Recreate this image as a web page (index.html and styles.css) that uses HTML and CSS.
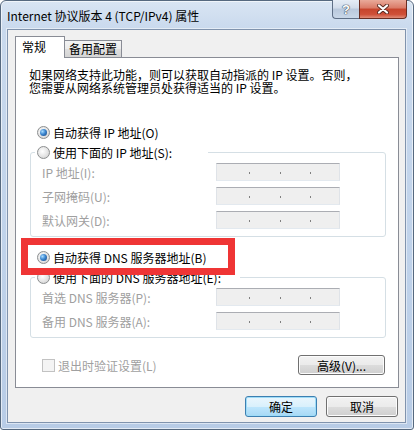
FILE: index.html
```html
<!DOCTYPE html>
<html lang="zh-CN">
<head>
  <meta charset="UTF-8" />
  <title>Internet 协议版本 4 (TCP/IPv4) 属性</title>
  <link rel="stylesheet" href="styles.css">
</head>
<body>
  <div class="window">
    <div class="titlebar">
      <span class="title">Internet 协议版本 4 (TCP/IPv4) 属性</span>
      <div class="caption">
        <div class="cap help">?</div>
        <div class="cap close">
          <svg width="12" height="10" viewBox="0 0 12 10">
            <path d="M2 1.5 L10 8.5 M10 1.5 L2 8.5" stroke="#5a2a22" stroke-width="4" stroke-linecap="round"/>
            <path d="M2 1.5 L10 8.5 M10 1.5 L2 8.5" stroke="#fff" stroke-width="2.2" stroke-linecap="round"/>
          </svg>
        </div>
      </div>
    </div>

    <div class="client">
      <div class="tabs">
        <div class="tab active">常规</div>
        <div class="tab">备用配置</div>
      </div>

      <div class="panel">
        <p class="desc">如果网络支持此功能，则可以获取自动指派的 IP 设置。否则，<br>您需要从网络系统管理员处获得适当的 IP 设置。</p>

        <div class="opt first"><span class="radio on"></span>自动获得 IP 地址(O)</div>

        <fieldset class="group">
          <legend class="opt ip-legend"><span class="radio"></span>使用下面的 IP 地址(S):</legend>
          <div class="field"><span class="lbl">IP 地址(I):</span><span class="ip"><i></i><b></b><i></i><b></b><i></i><b></b><i></i></span></div>
          <div class="field"><span class="lbl">子网掩码(U):</span><span class="ip"><i></i><b></b><i></i><b></b><i></i><b></b><i></i></span></div>
          <div class="field"><span class="lbl">默认网关(D):</span><span class="ip"><i></i><b></b><i></i><b></b><i></i><b></b><i></i></span></div>
        </fieldset>

        <div class="opt dns"><span class="radio on"></span>自动获得 DNS 服务器地址(B)</div>

        <fieldset class="group">
          <legend class="opt dns-legend"><span class="radio"></span>使用下面的 DNS 服务器地址(E):</legend>
          <div class="field"><span class="lbl">首选 DNS 服务器(P):</span><span class="ip"><i></i><b></b><i></i><b></b><i></i><b></b><i></i></span></div>
          <div class="field"><span class="lbl">备用 DNS 服务器(A):</span><span class="ip"><i></i><b></b><i></i><b></b><i></i><b></b><i></i></span></div>
        </fieldset>

        <div class="bottom-row">
          <div class="check"><span class="box"></span>退出时验证设置(L)</div>
          <div class="btn adv">高级(V)...</div>
        </div>

        <div class="mark"></div>
      </div>

      <div class="actions">
        <div class="btn default">确定</div>
        <div class="btn">取消</div>
      </div>
    </div>
  </div>
</body>
</html>
```

FILE: styles.css
```css
body {
  margin: 0;
  font-family: "Noto Sans CJK SC", "Liberation Sans", sans-serif;
  font-size: 12px;
  color: #000;
}

.window {
  width: 414px;
  height: 430px;
  box-sizing: border-box;
  display: flex;
  flex-direction: column;
  border: 1px solid #56697f;
  border-radius: 6px 6px 3px 3px;
  background: linear-gradient(180deg, #d9e5f3 0, #c9d9ed 28px, #bfd2ea 60%, #b8cce6 100%);
  box-shadow: inset 0 0 0 1px rgba(255,255,255,0.6);
}

.titlebar {
  height: 28px;
  display: flex;
  align-items: flex-start;
}

.title {
  padding: 8px 0 0 6px;
  line-height: 14px;
  font-size: 12px;
}

.caption {
  margin-left: auto;
  margin-right: 6px;
  margin-top: -1px;
  display: flex;
}

.cap {
  height: 19px;
  box-sizing: border-box;
  display: flex;
  align-items: center;
  justify-content: center;
  border: 1px solid #5f6f86;
  border-top: none;
}

.help {
  width: 27px;
  border-right: none;
  border-radius: 0 0 0 4px;
  background: linear-gradient(180deg, #e6edf6 0, #d2dcea 45%, #b9c8dc 50%, #c9d7e8 100%);
  color: #fff;
  font-family: "Liberation Sans", sans-serif;
  font-weight: bold;
  font-size: 13px;
  text-shadow: 0 0 1px #3c4a5c, 0 0 1px #3c4a5c, 0 0 1px #3c4a5c;
}

.close {
  width: 48px;
  border-radius: 0 0 4px 0;
  border-color: #6a2d22;
  background: linear-gradient(180deg, #e9aa9a 0, #da7a66 45%, #c6442c 50%, #cf5038 80%, #e08c78 100%);
}

.client {
  flex: 1;
  margin: 0 7px 6px 6px;
  padding: 6px 6px 0 7px;
  border: 1px solid #8093ad;
  background: #f0f0f0;
  box-shadow: 0 0 0 1px rgba(255,255,255,0.5);
}

.tabs {
  display: flex;
  align-items: flex-end;
  height: 21px;
}

.tab {
  height: 17px;
  box-sizing: border-box;
  padding: 0 4px;
  margin-left: -1px;
  line-height: 15px;
  border: 1px solid #898c95;
  border-bottom: none;
  background: linear-gradient(180deg, #f3f3f3 0, #ebebeb 50%, #dfdfdf 50%, #d4d4d4 100%);
}

.tab.active {
  width: 50px;
  height: 22px;
  margin-left: 0;
  margin-bottom: -1px;
  padding: 3px 0 0 6px;
  line-height: 14px;
  background: #fff;
  position: relative;
  z-index: 1;
}

.panel {
  height: 331px;
  box-sizing: border-box;
  border: 1px solid #898c95;
  background: #fff;
  position: relative;
}

.desc {
  margin: 10px 0 0 13px;
  line-height: 13px;
}

.opt {
  display: flex;
  align-items: center;
  height: 16px;
  gap: 3px;
}

.opt.first {
  margin: 30px 0 0 21px;
}

.opt.dns {
  margin: 12px 0 0 21px;
}

.radio {
  width: 13px;
  height: 13px;
  box-sizing: border-box;
  border-radius: 50%;
  border: 1px solid #8c8e8f;
  background: radial-gradient(circle at 40% 40%, #ffffff 0, #e6e6e6 50%, #cbcbcb 100%);
  position: relative;
  flex: none;
}

.radio.on::after {
  content: "";
  position: absolute;
  inset: 2px;
  border-radius: 50%;
  background: radial-gradient(circle at 35% 35%, #a8dcff 0, #3b86d0 45%, #163f78 100%);
}

.group {
  margin: 4px 12px 0 14px;
  padding: 0 0 7px 4px;
  border: 1px solid #d5dfe5;
  border-radius: 3px;
}

.group legend {
  padding: 0 0 0 2px;
}

.ip-legend {
  width: 171px;
}

.dns-legend {
  width: 203px;
}

.field {
  display: flex;
  align-items: center;
  height: 18px;
  margin-top: 6px;
  padding-left: 7px;
  color: #a0a0a0;
}

.group legend + .field {
  margin-top: 3px;
}

.lbl {
  width: 174px;
}

.ip {
  width: 124px;
  height: 18px;
  box-sizing: border-box;
  display: flex;
  padding-left: 4px;
  border: 1px solid;
  border-color: #abadb3 #dfe3e8 #e3e9ef #dfe3e8;
  background: #efefef;
}

.ip i {
  flex: 1;
}

.ip b {
  width: 3px;
  display: flex;
  justify-content: center;
}

.ip b::before {
  content: "";
  width: 1px;
  height: 2px;
  margin-top: 8px;
  background: #808080;
}

.bottom-row {
  display: flex;
  align-items: center;
  justify-content: space-between;
  height: 20px;
  margin: 17px 13px 0 26px;
}

.check {
  display: flex;
  align-items: center;
  gap: 3px;
  color: #a0a0a0;
}

.box {
  width: 13px;
  height: 13px;
  box-sizing: border-box;
  border: 1px solid #c2c2c2;
  background: #f4f4f4;
}

.btn {
  height: 20px;
  box-sizing: border-box;
  display: flex;
  align-items: center;
  justify-content: center;
  border: 1px solid #707070;
  border-radius: 3px;
  background: linear-gradient(180deg, #f2f2f2 0, #ebebeb 50%, #dddddd 50%, #cfcfcf 100%);
  box-shadow: inset 0 0 0 1px #fcfcfc;
}

.btn.adv {
  width: 87px;
}

.mark {
  position: absolute;
  left: 5px;
  top: 180px;
  width: 214px;
  height: 37px;
  box-sizing: border-box;
  border: 7px solid #ef3535;
}

.actions {
  display: flex;
  justify-content: flex-end;
  gap: 9px;
  margin: 8px 1px 0 0;
}

.actions .btn {
  width: 72px;
  height: 21px;
}

.btn.default {
  border-color: #3c7fb1;
  box-shadow: inset 0 0 0 1px #9fdcf7;
  background: linear-gradient(180deg, #eaf6fd 0, #d9f0fc 50%, #bee6fd 50%, #a7d9f5 100%);
}
```
